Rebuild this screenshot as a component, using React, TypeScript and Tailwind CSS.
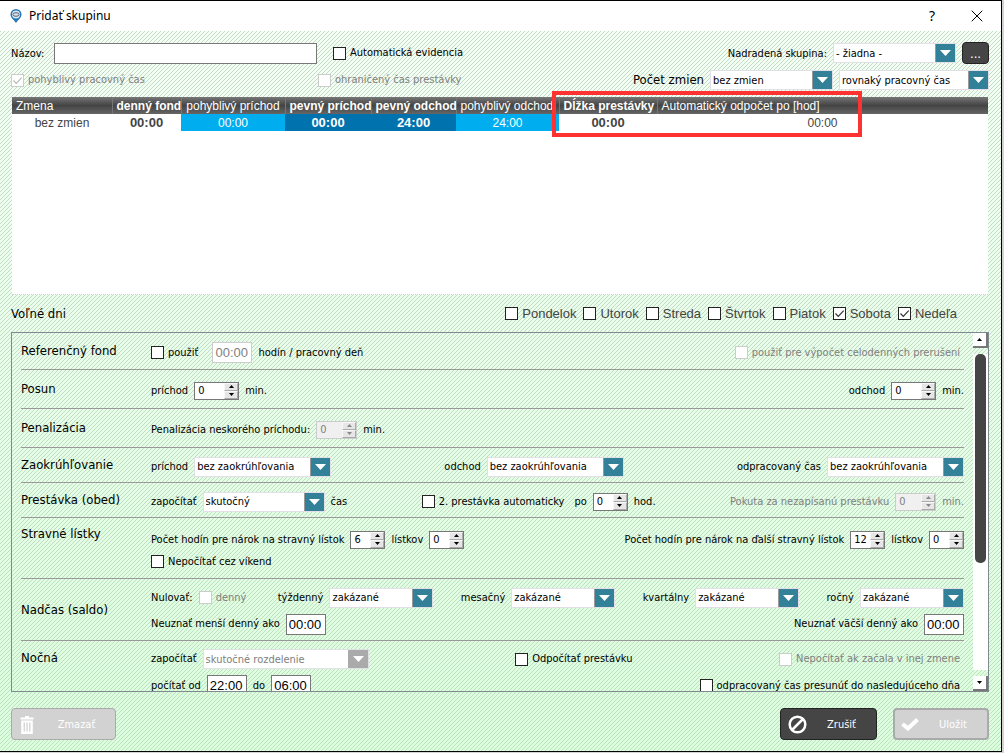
import type { ReactNode } from "react";
import { X } from "lucide-react";

const hatch =
  "bg-[image:linear-gradient(135deg,#c3dcc5_12.5%,transparent_12.5%,transparent_50%,#c3dcc5_50%,#c3dcc5_62.5%,transparent_62.5%),linear-gradient(#f5fdf5,#d9ffdb)] bg-[size:4px_4px,100%_100%]";

function Check({ label, checked, disabled, className = "" }: { label: string; checked?: boolean; disabled?: boolean; className?: string }) {
  return (
    <label className={`inline-flex items-center gap-1 whitespace-nowrap ${disabled ? "text-[#808080]" : ""} ${className}`}>
      <span className="relative inline-flex">
        <input
          type="checkbox"
          defaultChecked={checked}
          disabled={disabled}
          className="peer h-[13px] w-[13px] appearance-none border border-[#222] bg-white disabled:border-[#ccc]"
        />
        <svg viewBox="0 0 13 13" className="pointer-events-none absolute inset-0 hidden h-[13px] w-[13px] text-[#333] peer-checked:block peer-disabled:text-[#bbb]">
          <path d="M2.5 6.5 5.3 9.3 10.7 3.7" fill="none" stroke="currentColor" strokeWidth="1.2" />
        </svg>
      </span>
      {label}
    </label>
  );
}

function Combo({ label, value, width, disabled }: { label: string; value: string; width: string; disabled?: boolean }) {
  return (
    <span className={`relative inline-flex h-5 ${width}`}>
      <select
        aria-label={label}
        disabled={disabled}
        className="h-5 w-full appearance-none border border-[#e3dfe6] bg-white pt-px pl-[2px] text-black opacity-100 disabled:text-[#808080]"
      >
        <option>{value}</option>
      </select>
      <span className={`pointer-events-none absolute inset-y-px right-px flex w-5 items-center justify-center border-l ${disabled ? "border-[#aaa] bg-[#aaa]" : "border-[#999] bg-[#338099]"}`}>
        <svg width="11" height="6" viewBox="0 0 11 6"><path d="M0 0h11L5.5 6z" fill="#fff" /></svg>
      </span>
    </span>
  );
}

function Spin({ label, value, width = "w-[35px]", disabled }: { label: string; value: number; width?: string; disabled?: boolean }) {
  return (
    <span className={`inline-flex h-[18px] border ${width} ${disabled ? "border-[#ccc] bg-[#f0f0f0] text-[#808080]" : "border-[#777] bg-white"}`}>
      <input
        type="number"
        aria-label={label}
        defaultValue={value}
        disabled={disabled}
        className="w-0 min-w-0 flex-1 [appearance:textfield] pt-px pl-[3px] [&::-webkit-inner-spin-button]:appearance-none"
      />
      <span className="flex w-[14px] flex-col">
        {["M0 3h5L2.5 0z", "M0 0h5L2.5 3z"].map((d, i) => (
          <button key={d} type="button" disabled={disabled} aria-label={`${label} ${i ? "-" : "+"}`}
            className="flex flex-1 items-center justify-center border border-[#f8f8f8] border-r-[#aaa] border-b-[#aaa] bg-[#e6e6e6]">
            <svg width="5" height="3" viewBox="0 0 5 3"><path d={d} fill={disabled ? "#888" : "#000"} /></svg>
          </button>
        ))}
      </span>
    </span>
  );
}

function Time({ label, value, disabled }: { label: string; value: string; disabled?: boolean }) {
  return (
    <input
      type="text"
      aria-label={label}
      defaultValue={value}
      disabled={disabled}
      className="h-[21px] w-10 border border-[#777] bg-white px-[2px] font-['Liberation_Sans',sans-serif] text-[13px] text-black disabled:border-[#ccc] disabled:text-[#808080]"
    />
  );
}

function Group({ children, className = "" }: { children: ReactNode; className?: string }) {
  return <div className={`flex items-center gap-[6px] whitespace-nowrap ${className}`}>{children}</div>;
}

function Section({ title, height, top, children }: { title: string; height: string; top?: boolean; children: ReactNode }) {
  return (
    <section className={`flex shrink-0 border-b border-[#999] ${height}`}>
      <h2 className={`flex w-[130px] shrink-0 text-[13px] ${top ? "items-start pt-[9px]" : "items-center"}`}>{title}</h2>
      <div className="flex min-w-0 flex-1 flex-col justify-center gap-[6px] pt-[3px]">{children}</div>
    </section>
  );
}

const columns = [
  { name: "Zmena", value: "bez zmien", width: "w-[100px]", head: "text-left font-normal", cell: "text-[12px]" },
  { name: "denný fond", value: "00:00", width: "w-[69px]", head: "font-bold", cell: "font-bold" },
  { name: "pohyblivý príchod", value: "00:00", width: "w-[104px]", head: "font-normal", cell: "bg-[#00aeef] text-[12px] text-white" },
  { name: "pevný príchod", value: "00:00", width: "w-[86px]", head: "font-bold", cell: "bg-[#0072ad] font-bold text-white" },
  { name: "pevný odchod", value: "24:00", width: "w-[85px]", head: "font-bold", cell: "bg-[#0072ad] font-bold text-white" },
  { name: "pohyblivý odchod", value: "24:00", width: "w-[103px]", head: "text-left font-normal", cell: "bg-[#00aeef] text-[12px] text-white" },
  { name: "Dĺžka prestávky", value: "00:00", width: "w-[98px]", head: "font-bold", cell: "font-bold" },
  { name: "Automatický odpočet po [hod]", value: "00:00", width: "", head: "text-left font-normal", cell: "text-[12px]" },
];

const days = ["Pondelok", "Utorok", "Streda", "Štvrtok", "Piatok", "Sobota", "Nedeľa"];

export default function App() {
  return (
    <div className="h-screen bg-[#d5d1d5] pr-[2px] pb-px font-['DejaVu_Sans_Condensed','Noto_Sans',sans-serif] text-[11px] leading-[14px] text-black">
      <div className="flex h-full flex-col border-t border-r border-b border-black">
        <header className="flex h-[30px] shrink-0 items-center bg-white pr-[14px] pl-[10px]">
          <svg width="12" height="14" viewBox="0 0 12 14">
            <path d="M6 14C4.500 11 .5 9 .5 5.500a5.500 5.500 0 0 1 11 0C11.500 9 7.500 11 6 14z" fill="#2277b8" />
            <circle cx="6" cy="5.500" r="4" fill="#d5e4ee" />
            <ellipse cx="6" cy="5.500" rx="3" ry="1.800" fill="none" stroke="#667" />
          </svg>
          <h1 className="ml-[7px] font-['Noto_Sans',sans-serif] text-[12px]">Pridať skupinu</h1>
          <button type="button" className="ml-auto font-['Noto_Sans',sans-serif] text-[14px]">?</button>
          <button type="button" aria-label="Zavrieť" className="ml-8"><X size={20} strokeWidth={1.2} /></button>
        </header>

        <main className={`flex min-h-0 flex-1 flex-col pr-3 pl-[11px] ${hatch}`}>
          <div className="mt-[11px] flex h-[22px] shrink-0 items-center">
            <label htmlFor="nazov" className="w-[43px] pt-px">Názov:</label>
            <input id="nazov" type="text" className="h-[21px] w-[263px] border border-[#777] bg-white px-1" />
            <Check label="Automatická evidencia" className="ml-4" />
            <Group className="ml-auto">
              <span className="pt-px">Nadradená skupina:</span>
              <Combo label="Nadradená skupina" value="- žiadna -" width="w-[123px]" />
              <button type="button" className="h-[22px] w-[27px] rounded-[4px] border border-[#222] bg-[#454545] pt-[2px] text-[13px] text-white">...</button>
            </Group>
          </div>
          <div className="mt-[6px] flex h-5 shrink-0 items-center">
            <Check label="pohyblivý pracovný čas" checked disabled className="w-[307px]" />
            <Check label="ohraničený čas prestávky" disabled />
            <Group className="ml-auto">
              <span className="text-[13px]">Počet zmien</span>
              <Combo label="Počet zmien" value="bez zmien" width="w-[123px]" />
              <Combo label="Pracovný čas" value="rovnaký pracovný čas" width="w-[150px]" />
            </Group>
          </div>

          <div className="relative mt-[7px] mr-px ml-px h-[198px] shrink-0 border-b border-dotted border-[#ccc] bg-white font-['Liberation_Sans',sans-serif] text-[12px]">
            <table className="w-full table-fixed">
              <thead>
                <tr className="h-[17px] bg-linear-to-b from-[#777] via-[#444] to-[#666] text-white">
                  {columns.map(c => (
                    <th key={c.name} className={`overflow-hidden border-r border-[#777] px-1 whitespace-nowrap last:border-r-0 ${c.width} ${c.head}`}>{c.name}</th>
                  ))}
                </tr>
              </thead>
              <tbody>
                <tr className="h-[17px] text-center text-[13px] text-[#444]">
                  {columns.map(c => <td key={c.name} className={c.cell}>{c.value}</td>)}
                </tr>
              </tbody>
            </table>
            <div className="pointer-events-none absolute -top-[6px] left-[540px] h-[46px] w-[310px] border-4 border-[#ff3232]" />
          </div>

          <div className="flex h-[37px] shrink-0 items-center">
            <h2 className="pt-px text-[13px]">Voľné dni</h2>
            <div className="mr-8 ml-auto flex gap-[7px] font-['Liberation_Sans',sans-serif] text-[13px] text-[#444]">
              {days.map((d, i) => <Check key={d} label={d} checked={i > 4} />)}
            </div>
          </div>

          <div className="flex min-h-0 flex-1 border border-[#808890]">
            <div className="flex min-w-0 flex-1 flex-col overflow-hidden pr-[9px] pl-[9px]">
              <Section title="Referenčný fond" height="h-[37px]">
                <div className="flex items-center justify-between">
                  <Group>
                    <Check label="použiť" className="mr-2" />
                    <Time label="Referenčný fond" value="00:00" disabled />
                    <span>hodín / pracovný deň</span>
                  </Group>
                  <Check label="použiť pre výpočet celodenných prerušení" disabled className="mr-1" />
                </div>
              </Section>
              <Section title="Posun" height="h-[39px]">
                <div className="flex justify-between">
                  <Group><span>príchod</span><Spin label="Posun príchod" value={0} width="w-[45px]" /><span>min.</span></Group>
                  <Group><span>odchod</span><Spin label="Posun odchod" value={0} width="w-[45px]" /><span>min.</span></Group>
                </div>
              </Section>
              <Section title="Penalizácia" height="h-[39px]">
                <Group><span>Penalizácia neskorého príchodu:</span><Spin label="Penalizácia" value={0} width="w-[41px]" disabled /><span>min.</span></Group>
              </Section>
              <Section title="Zaokrúhľovanie" height="h-[35px]">
                <div className="flex justify-between">
                  <Group><span>príchod</span><Combo label="Zaokrúhľovanie príchod" value="bez zaokrúhľovania" width="w-[137px]" /></Group>
                  <Group><span>odchod</span><Combo label="Zaokrúhľovanie odchod" value="bez zaokrúhľovania" width="w-[137px]" /></Group>
                  <Group><span>odpracovaný čas</span><Combo label="Odpracovaný čas" value="bez zaokrúhľovania" width="w-[137px]" /></Group>
                </div>
              </Section>
              <Section title="Prestávka (obed)" height="h-[35px]">
                <div className="flex justify-between">
                  <Group><span>započítať</span><Combo label="Započítať prestávku" value="skutočný" width="w-[122px]" /><span>čas</span></Group>
                  <Group>
                    <Check label="2. prestávka automaticky" className="mr-1" />
                    <span>po</span><Spin label="2. prestávka po" value={0} /><span>hod.</span>
                  </Group>
                  <Group className="text-[#808080]"><span>Pokuta za nezapísanú prestávku</span><Spin label="Pokuta" value={0} width="w-[41px]" disabled /><span>min.</span></Group>
                </div>
              </Section>
              <Section title="Stravné lístky" height="h-[61px]" top>
                <div className="flex justify-between">
                  <Group>
                    <span>Počet hodín pre nárok na stravný lístok</span><Spin label="Hodiny" value={6} />
                    <span>lístkov</span><Spin label="Lístky" value={0} />
                  </Group>
                  <Group>
                    <span>Počet hodín pre nárok na ďalší stravný lístok</span><Spin label="Hodiny na ďalší" value={12} />
                    <span>lístkov</span><Spin label="Ďalšie lístky" value={0} />
                  </Group>
                </div>
                <Check label="Nepočítať cez víkend" />
              </Section>
              <Section title="Nadčas (saldo)" height="h-[62px]">
                <div className="flex justify-between">
                  <Group className="pr-1"><span>Nulovať:</span><Check label="denný" disabled /></Group>
                  <Group><span>týždenný</span><Combo label="Týždenný" value="zakázané" width="w-[104px]" /></Group>
                  <Group><span>mesačný</span><Combo label="Mesačný" value="zakázané" width="w-[104px]" /></Group>
                  <Group><span>kvartálny</span><Combo label="Kvartálny" value="zakázané" width="w-[104px]" /></Group>
                  <Group><span>ročný</span><Combo label="Ročný" value="zakázané" width="w-[104px]" /></Group>
                </div>
                <div className="flex justify-between">
                  <Group><span>Neuznať menší denný ako</span><Time label="Neuznať menší" value="00:00" /></Group>
                  <Group><span>Neuznať väčší denný ako</span><Time label="Neuznať väčší" value="00:00" /></Group>
                </div>
              </Section>
              <section className="flex shrink-0 pt-2">
                <h2 className="w-[130px] shrink-0 text-[13px] leading-[18px]">Nočná</h2>
                <div className="flex flex-1 flex-col gap-[6px]">
                  <div className="flex justify-between">
                    <Group><span>započítať</span><Combo label="Započítať nočnú" value="skutočné rozdelenie" width="w-[166px]" disabled /></Group>
                    <Check label="Odpočítať prestávku" />
                    <Check label="Nepočítať ak začala v inej zmene" disabled className="mr-1" />
                  </div>
                  <div className="flex justify-between">
                    <Group><span>počítať od</span><Time label="Nočná od" value="22:00" /><span>do</span><Time label="Nočná do" value="06:00" /></Group>
                    <Check label="odpracovaný čas presunúť do nasledujúceho dňa" className="mr-1" />
                  </div>
                </div>
              </section>
            </div>
            <div className="flex w-[15px] shrink-0 flex-col">
              <button type="button" aria-label="Hore" className="flex h-[15px] items-center justify-center border-r-2 border-b-2 border-[#777] bg-white">
                <svg width="5" height="3" viewBox="0 0 5 3"><path d="M0 3h5L2.500 0z" /></svg>
              </button>
              <div className="my-[6px] flex-1 bg-white px-[2px]">
                <div className="h-[66%] rounded-[5px] bg-[#454545]" />
              </div>
              <button type="button" aria-label="Dole" className="flex h-[15px] items-center justify-center border-r-2 border-b-2 border-[#777] bg-white">
                <svg width="5" height="3" viewBox="0 0 5 3"><path d="M0 0h5L2.500 3z" /></svg>
              </button>
            </div>
          </div>

          <footer className="flex shrink-0 pt-4 pb-[11px] text-white">
            <button type="button" disabled className="flex h-8 w-[105px] items-center rounded-[4px] border border-[#aaa] bg-[#d2d2d2] pt-px pl-2">
              <svg width="14" height="18" viewBox="0 0 14 18" fill="#fff">
                <path d="M5 0h4v1.500h4.500v2H.5v-2H5z" />
                <path fillRule="evenodd" d="M1.200 4.500h11.600V18H1.200zM3.600 6.500v9h1.300v-9zm2.800 0v9h1.300v-9zm2.800 0v9h1.300v-9z" />
              </svg>
              <span className="flex-1 pl-1 text-center">Zmazať</span>
            </button>
            <button type="button" className="ml-auto flex h-8 w-[97px] items-center rounded-[4px] border border-[#222] bg-[#454545] pl-[7px]">
              <svg width="19" height="19" viewBox="0 0 19 19" fill="none" stroke="#fff" strokeWidth="2.500">
                <circle cx="9.500" cy="9.500" r="7.800" />
                <path d="M15 4 4 15" />
              </svg>
              <span className="flex-1 pt-px text-center">Zrušiť</span>
            </button>
            <button type="button" disabled className="ml-4 flex h-8 w-24 items-center rounded-[4px] border-2 border-[#aaa] bg-[#d2d2d2] pl-[6px]">
              <svg width="18" height="13" viewBox="0 0 18 13" fill="none" stroke="#fff" strokeWidth="4"><path d="M1.500 6 7 10.500 16.500 1.500" /></svg>
              <span className="flex-1 pt-px text-center">Uložit</span>
            </button>
          </footer>
        </main>
      </div>
    </div>
  );
}
